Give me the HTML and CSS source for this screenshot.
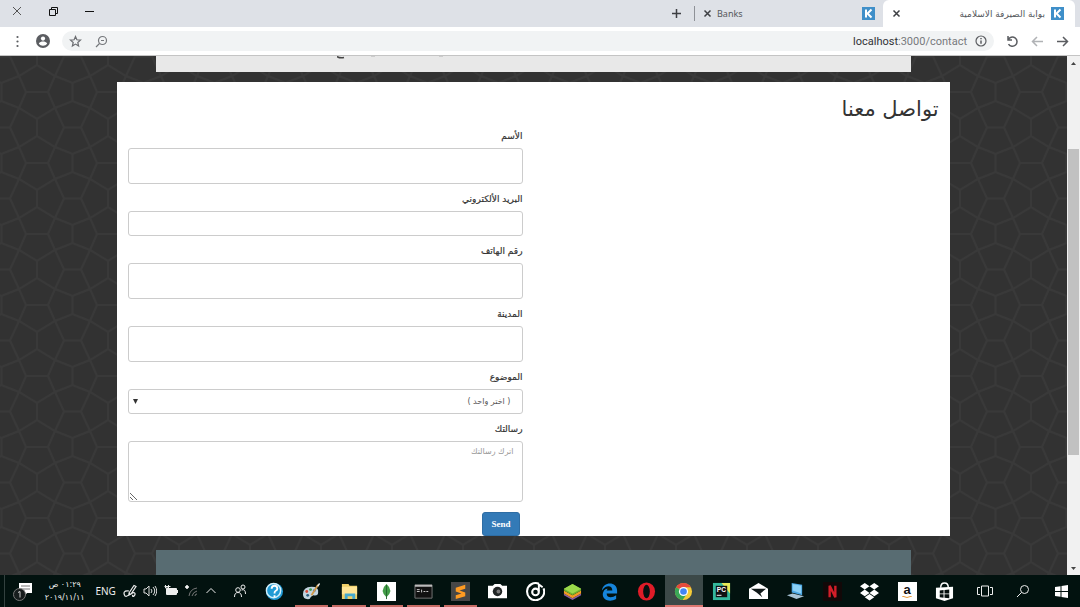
FILE: index.html
```
<!DOCTYPE html>
<html lang="ar" dir="rtl">
<head>
<meta charset="utf-8">
<title>بوابة الصيرفة الاسلامية</title>
<link rel="stylesheet" href="styles.css">
</head>
<body>
<header class="tabstrip">
  <div class="tab tab-active">
    <svg class="fav" viewBox="0 0 13 13"><rect width="13" height="13" fill="#3f8fc9"/><path d="M4 2.500v8M9.500 2.500L5.500 6.500L9.500 10.500" fill="none" stroke="#fff" stroke-width="2"/></svg>
    <span class="tab-title">بوابة الصيرفة الاسلامية</span>
    <button class="plain" aria-label="إغلاق"><svg width="9" height="9" viewBox="0 0 9 9"><path d="M1.500 1.500l6 6M7.500 1.500l-6 6" class="line dark"/></svg></button>
  </div>
  <div class="tab">
    <svg class="fav" viewBox="0 0 13 13"><rect width="13" height="13" fill="#3f8fc9"/><path d="M4 2.500v8M9.500 2.500L5.500 6.500L9.500 10.500" fill="none" stroke="#fff" stroke-width="2"/></svg>
    <span class="tab-title tab-latin">Banks</span>
    <button class="plain" aria-label="إغلاق"><svg width="9" height="9" viewBox="0 0 9 9"><path d="M1.500 1.500l6 6M7.500 1.500l-6 6" class="line dark"/></svg></button>
  </div>
  <button class="plain new-tab" aria-label="علامة تبويب جديدة"><svg width="11" height="11" viewBox="0 0 11 11"><path d="M5.500 1v9M1 5.500h9" class="line dark"/></svg></button>
  <div class="window-buttons">
    <button class="plain" aria-label="تصغير"><svg width="12" height="12" viewBox="0 0 12 12"><path d="M2 5.500h9" stroke="#111" stroke-width="1"/></svg></button>
    <button class="plain" aria-label="استعادة"><svg width="12" height="12" viewBox="0 0 12 12"><path d="M2.500 3.500h6v6h-6zM4.500 3V1.500h6v6H9" fill="none" stroke="#111"/></svg></button>
    <button class="plain" aria-label="إغلاق النافذة"><svg width="12" height="12" viewBox="0 0 12 12"><path d="M2 1l8 8M10 1l-8 8" stroke="#555"/></svg></button>
  </div>
</header>

<nav class="toolbar">
  <button class="plain" aria-label="رجوع"><svg width="13" height="13" viewBox="0 0 13 13"><path d="M1 6.500h10M7 2l4.500 4.500L7 11" class="line gray"/></svg></button>
  <button class="plain" aria-label="تقدم"><svg width="13" height="13" viewBox="0 0 13 13"><path d="M12 6.500H2M6 2L1.500 6.500L6 11" class="line light"/></svg></button>
  <button class="plain" aria-label="تحديث"><svg width="13" height="13" viewBox="0 0 13 13"><path d="M2 1v4h4M2.200 4.800a4.600 4.600 0 1 1 .3 4.300" class="line gray"/></svg></button>
  <div class="omnibox">
    <svg width="12" height="12" viewBox="0 0 12 12"><circle cx="6" cy="6" r="5" fill="none" stroke="#5b5d61" stroke-width="1.200"/><path d="M6 5.500v3.200M6 3v1.300" class="line gray"/></svg>
    <span class="url" dir="ltr"><b>localhost</b>:3000/contact</span>
    <button class="plain zoom" aria-label="تكبير"><svg width="13" height="13" viewBox="0 0 13 13"><circle cx="7.500" cy="5.500" r="4" fill="none" stroke="#75777b" stroke-width="1.200"/><path d="M4.500 8.500L1 12M6 5.500h3" fill="none" stroke="#75777b" stroke-width="1.200"/></svg></button>
    <button class="plain" aria-label="إشارة مرجعية"><svg width="13" height="13" viewBox="0 0 13 13"><path d="M6.500 1.500l1.400 3.300 3.600.3-2.700 2.400.8 3.500-3.100-1.900-3.100 1.900.8-3.500L1.500 5.100l3.600-.3z" fill="none" stroke="#6b6d71" stroke-width="1.200"/></svg></button>
  </div>
  <button class="plain avatar" aria-label="الحساب"><svg width="14" height="14" viewBox="0 0 14 14"><circle cx="7" cy="7" r="7" fill="#5b5d61"/><circle cx="7" cy="4.600" r="2.100" fill="#fff"/><path d="M2.800 9.600c1-1.600 2.500-2 4.200-2s3.200.4 4.200 2c-1 1.500-2.500 2.200-4.200 2.200s-3.200-.7-4.200-2.200z" fill="#fff"/></svg></button>
  <button class="plain" aria-label="القائمة"><svg width="13" height="13" viewBox="0 0 13 13" fill="#5b5d61"><circle cx="6.500" cy="2" r="1.100"/><circle cx="6.500" cy="6.500" r="1.100"/><circle cx="6.500" cy="11" r="1.100"/></svg></button>
</nav>

<div class="viewport">
  <div class="scrollbar" aria-hidden="true">
    <svg width="5" height="3" viewBox="0 0 7 4"><path d="M0 4L3.500 0L7 4z" fill="#444"/></svg>
    <div class="track"><div class="thumb"></div></div>
    <svg width="5" height="3" viewBox="0 0 7 4"><path d="M0 0L3.500 4L7 0z" fill="#444"/></svg>
  </div>
  <div class="page">
    <svg class="backdrop" aria-hidden="true">
      <defs>
        <pattern id="lattice" width="71" height="71" x="37" y="36" patternUnits="userSpaceOnUse">
          <g fill="none" stroke="#393939" stroke-width="2">
            <path d="M0 0h11M60 0h11M0 71h11M60 71h11M35.500 0v9M35.500 62v9M0 27v17M71 27v17M27 35.500h17"/>
            <path d="M11 0L18 16L27 35.500L18 55L11 71M60 0L53 16L44 35.500L53 55L60 71"/>
            <path d="M0 27L18 16L35.500 9L53 16L71 27M0 44L18 55L35.500 62L53 55L71 44"/>
          </g>
        </pattern>
      </defs>
      <rect width="100%" height="100%" fill="#323232"/>
      <rect width="100%" height="100%" fill="url(#lattice)"/>
    </svg>
    <div class="intro"><svg width="110" height="3" viewBox="0 0 110 3"><path d="M0 .5q3 2 7 1" fill="none" stroke="#444" stroke-width="1.500"/><path d="M34 .5h4M102 .5h4" stroke="#ccc"/></svg></div>
    <main class="card">
      <h1>تواصل معنا</h1>
      <form>
        <label for="name">الأسم</label>
        <input class="field tall" id="name" type="text">
        <label for="email">البريد الألكتروني</label>
        <input class="field" id="email" type="email">
        <label for="phone">رقم الهاتف</label>
        <input class="field tall" id="phone" type="tel">
        <label for="city">المدينة</label>
        <input class="field tall" id="city" type="text">
        <label for="subject">الموضوع</label>
        <select class="field" id="subject"><option>( اختر واحد )</option></select>
        <label for="message">رسالتك</label>
        <textarea class="field" id="message" placeholder="اترك رسالتك"></textarea>
        <button class="send" type="submit">Send</button>
      </form>
    </main>
    <footer class="page-footer"></footer>
  </div>
</div>

<footer class="taskbar" dir="ltr">
  <div class="tray">
    <svg class="notice" width="22" height="22" viewBox="0 0 22 22"><path d="M7 3h13v10h-5l-3 4v-4H7z" fill="#fff"/><path d="M9 6h9M9 9h9" stroke="#777"/><circle cx="7.500" cy="14.500" r="6" fill="#171d1d" stroke="#777"/><path d="M6 12.500l2-1v6" fill="none" stroke="#ccc"/></svg>
    <div class="clock" dir="rtl"><span>٠١:٢٩ ص</span><span dir="ltr">٢٠١٩/١١/١١</span></div>
    <span class="lang">ENG</span>
    <svg width="14" height="14" viewBox="0 0 14 14" fill="none" stroke="#eee" stroke-width="1.200"><path d="M6 9L11 1.500l2 1L8 10l-2 1zM6 7C1 6 0 9 2 12c2 1 4-1 5-3M8 10c4-3 5 0 3 2-1 1-2 0-1-1"/></svg>
    <svg width="14" height="12" viewBox="0 0 14 12" fill="none" stroke="#ddd"><path d="M1 4h2l3-3v10L3 8H1zM8 4q2 2 0 4M10 2q3.500 4 0 8M12 1q3.500 5 0 10"/></svg>
    <svg width="14" height="12" viewBox="0 0 14 12"><path d="M3 4h9v5H3z" fill="#eee"/><path d="M2.500 3.500h10v6h-10zM13.500 5v3M.5 1.500h6M1.500 0v3h3V0" fill="none" stroke="#eee"/></svg>
    <svg width="14" height="14" viewBox="0 0 14 14" fill="none" stroke="#777"><path d="M4 12q1-7 8-8M7 12q1-4 5-5M10 12q0-2 2-2"/><path d="M0 3h4M2 1v4" stroke="#fff" stroke-width="1.500"/></svg>
    <svg width="12" height="12" viewBox="0 0 12 12"><path d="M1.500 8L6 3.500 10.500 8" fill="none" stroke="#eee"/></svg>
    <svg class="people" width="14" height="14" viewBox="0 0 14 14" fill="none" stroke="#eee"><circle cx="5" cy="6" r="2.300"/><path d="M1.500 13q0-4.500 3.500-4.500t3.500 4.500"/><circle cx="10" cy="3" r="2"/><path d="M8.500 6q4-1.500 4 4"/></svg>
  </div>
  <div class="apps">
    <span class="app"><svg viewBox="0 0 20 20"><circle cx="10" cy="10" r="9" fill="#219bd5"/><circle cx="9" cy="9" r="7.500" fill="none" stroke="#d5f0fa" stroke-width="1.500"/><path d="M7 7q0-3 3-3t3 3q0 1.500-2 2.500-1 .5-1 2.500M10 14v2" fill="none" stroke="#fff" stroke-width="2"/></svg></span>
    <span class="app open"><svg viewBox="0 0 20 20"><path d="M1 13q0-8 9-8 8 0 7 6 0 4-5 3-3 1-4 4-7 1-7-5z" fill="#c2d4df"/><circle cx="5" cy="10" r="1.500" fill="#d74c3a"/><circle cx="9" cy="8" r="1.500" fill="#409c52"/><circle cx="13" cy="9" r="1.500" fill="#3268bb"/><circle cx="6" cy="14" r="1.500" fill="#2b6080"/><path d="M10 14l7-11" stroke="#cf994c" stroke-width="2"/><path d="M16 4l2-3 1 1-2 3z" fill="#eee"/></svg></span>
    <span class="app open"><svg viewBox="0 0 20 20"><path d="M2 2h7l1 2h8v14H2z" fill="#f0cf68"/><path d="M2 5h16v8H2z" fill="#ffe596"/><path d="M5 18v-6h11v6h-3v-3H8v3z" fill="#46aacf"/></svg></span>
    <span class="app open"><svg viewBox="0 0 20 20"><path d="M0 0h20v20H0z" fill="#fff"/><path d="M10 2q8 7 0 14-8-7 0-14z" fill="#439d48"/><path d="M10 3v15" stroke="#24662d"/></svg></span>
    <span class="app open"><svg viewBox="0 0 20 20"><path d="M1 3h18v14H1z" fill="#111" stroke="#777"/><path d="M1 3h18v2H1z" fill="#bbb"/><path d="M3 8h3M3 10h3M8 8v3M10 10h2M13 10h2" stroke="#ccc"/></svg></span>
    <span class="app open"><svg viewBox="0 0 20 20"><path d="M0 0h20v20H0z" fill="#474747"/><path d="M15 3v4L9 9l6 2v4L5 18v-4l6-2-6-2V6z" fill="#ff9b22"/></svg></span>
    <span class="app"><svg viewBox="0 0 20 20"><path d="M0 4h5l2-2h6l2 2h5v13H0z" fill="#fff"/><circle cx="10" cy="10" r="5" fill="#202525"/><circle cx="11" cy="10" r="2" fill="#777"/></svg></span>
    <span class="app"><svg viewBox="0 0 20 20" fill="none" stroke="#fff"><path d="M13.500 1.800a9 9 0 1 0 5 5" stroke-width="2.200"/><circle cx="10" cy="10.500" r="3.500" stroke-width="2.200"/><path d="M13.500 10V2.500l4 3" stroke-width="2"/></svg></span>
    <span class="app"><svg viewBox="0 0 20 20"><path d="M1 12l9 5 9-5v2l-9 5-9-5z" fill="#8d5ca4"/><path d="M1 9l9 5 9-5v3l-9 5-9-5z" fill="#f09b24"/><path d="M1 7l9-5 9 5v2l-9 5-9-5z" fill="#72b32e"/><path d="M1 7l9-5 9 5-9 5z" fill="#9bd94b"/></svg></span>
    <span class="app"><svg viewBox="0 0 20 20"><path d="M2 9C3-1 18-1 18 9v3H7c0 5 6 5 10 2v4C9 22 2 18 3 12c1-4 3-5 5-5L7 9h6c0-6-7-6-11 0z" fill="#1685dc"/></svg></span>
    <span class="app"><svg viewBox="0 0 20 20"><ellipse cx="10" cy="10" rx="9" ry="9.500" fill="#df1c28"/><ellipse cx="10" cy="10" rx="3.500" ry="7" fill="#061111"/></svg></span>
    <span class="app open current"><svg viewBox="0 0 20 20"><circle cx="10" cy="10" r="9" fill="#f6cb38"/><path d="M10 10L2.200 5.500A9 9 0 0 1 17.800 5.500H10z" fill="#e64a3c"/><path d="M10 10L2.200 5.500A9 9 0 0 0 9 19l5-7z" fill="#3aa757"/><circle cx="10" cy="10" r="4.800" fill="#fff"/><circle cx="10" cy="10" r="3.500" fill="#4285f4"/></svg></span>
    <span class="app"><svg viewBox="0 0 20 20"><path d="M1 1h18v18H1z" fill="#34b99d"/><path d="M10 1h9v11z" fill="#e9ea58"/><path d="M4 4h12v12H4z" fill="#111"/><path d="M5 14h5" stroke="#fff"/><text x="5" y="11" class="pc">PC</text></svg></span>
    <span class="app"><svg viewBox="0 0 20 20"><path d="M0 7l10-6 10 6v11H0z" fill="#fff"/><path d="M2 7h16l-6 5 2 4-6-5z" fill="#101919"/></svg></span>
    <span class="app"><svg viewBox="0 0 20 20"><path d="M6 1l11 2v11L6 11z" fill="#4ba7e3"/><path d="M7 2l9 2v8L7 9z" fill="#8cd0f5"/><path d="M1 14l6-2 12 3-8 3z" fill="#a9c4d5"/></svg></span>
    <span class="app"><svg viewBox="0 0 20 20"><path d="M0 0h20v20H0z" fill="#120808"/><path d="M7 16V4l6 12V4" fill="none" stroke="#d51e29" stroke-width="2.500"/></svg></span>
    <span class="app"><svg viewBox="0 0 20 20" fill="#fff"><path d="M5 1l5 3.500L5 8 0 4.500zM15 1l5 3.500L15 8l-5-3.500zM5 8l5 3.500L5 15l-5-3.500zM15 8l5 3.500-5 3.500-5-3.500zM10 12.500l5 3.500-5 3.500L5 16z"/></svg></span>
    <span class="app shop"><b>a</b><svg viewBox="0 0 12 3"><path d="M1 0q5 3 10 0" fill="none" stroke="#e99a35"/></svg></span>
    <span class="app"><svg viewBox="0 0 20 20"><path d="M1 6l18-1v12l-9 3-9-3z" fill="#fff"/><path d="M6 6q0-5 4-5t4 5" fill="none" stroke="#fff" stroke-width="1.500"/><path d="M5 9l4-.5V12H5zM10 8.500l5-.5v4h-5zM5 13h4v3.500L5 16zM10 13h5v4l-5-.5z" fill="#07100f"/></svg></span>
  </div>
  <div class="system">
    <svg width="16" height="12" viewBox="0 0 16 12" fill="none" stroke="#eee"><path d="M4.500 1v10h7V1zM3 2.500H.5v7H3M13 2.500h2.500v7H13"/></svg>
    <svg width="14" height="14" viewBox="0 0 14 14" fill="none" stroke="#eee"><circle cx="8.500" cy="5.500" r="4"/><path d="M5.500 8.500L1 13"/></svg>
    <svg width="13" height="13" viewBox="0 0 13 13" fill="#fff"><path d="M0 2l5.500-.8V6H0zM6.500 1L13 0v6H6.500zM0 7h5.500v4.800L0 11zM6.500 7H13v6l-6.500-1z"/></svg>
  </div>
</footer>
</body>
</html>
```
FILE: styles.css
```
* { box-sizing: border-box; }
body {
  margin: 0;
  height: 100vh;
  display: flex;
  flex-direction: column;
  overflow: hidden;
  font-family: "DejaVu Sans", sans-serif;
  color: #333;
}
svg { display: block; flex: none; }
.plain {
  display: grid;
  place-items: center;
  padding: 0;
  border: 0;
  background: none;
}
.line { fill: none; stroke-width: 1.5; }
.dark { stroke: #3d3f43; }
.gray { stroke: #5b5d61; }
.light { stroke: #b0b2b5; }

.tabstrip {
  display: flex;
  height: 27px;
  flex: none;
  padding-right: 5px;
  background: #dee1e7;
}
.tab {
  display: flex;
  align-items: center;
  width: 188px;
  padding: 0 8px;
  gap: 5px;
  font-size: 9px;
}
.tab-active {
  width: 192px;
  padding: 0 11px 0 9px;
  gap: 6px;
  background: #fff;
  border-radius: 6px 6px 0 0;
}
.fav { width: 13px; height: 13px; }
.tab-title { flex: 1; white-space: nowrap; color: #55585c; }
.tab-latin { font: 9px "Noto Sans", sans-serif; text-align: left; direction: ltr; }
.new-tab {
  width: 36px;
  margin: 6px 0;
  border-right: 1px solid #8e9197;
}
.window-buttons {
  display: flex;
  align-items: center;
  gap: 24px;
  margin-right: auto;
  padding-left: 11px;
  padding-bottom: 4px;
}

.toolbar {
  display: flex;
  align-items: center;
  gap: 12px;
  height: 29px;
  flex: none;
  padding: 0 11px;
  border-bottom: 1px solid #c4c4c4;
  background: #fff;
}
.omnibox {
  display: flex;
  align-items: center;
  flex: 1;
  height: 20px;
  gap: 13px;
  padding: 0 7px;
  border-radius: 10px;
  background: #f1f3f4;
}
.url { margin-right: -5px; font: 11px Roboto, sans-serif; color: #77797c; }
.url b { font-weight: 400; color: #303134; }
.zoom { margin-right: auto; }

.viewport { display: flex; flex: 1; min-height: 0; }
.scrollbar {
  display: flex;
  flex-direction: column;
  align-items: center;
  gap: 5px;
  width: 13px;
  padding: 6px 0 5px;
  background: #f1f1f1;
}
.track { flex: 1; width: 11px; padding-top: 79px; }
.thumb { height: 74%; background: #c1c1c1; }
.page {
  position: relative;
  display: flex;
  flex-direction: column;
  align-items: center;
  flex: 1;
  min-width: 0;
}
.backdrop { position: absolute; inset: 0; width: 100%; height: 100%; }
.intro, .card, .page-footer { position: relative; }
.intro {
  width: 70.7%;
  height: 16px;
  flex: none;
  padding-right: 464px;
  background: #e8e8e8;
}
.card {
  width: 78%;
  margin: 10px 0 14px;
  padding: 0 11px;
  background: #fff;
}
.card h1 {
  margin: 0;
  height: 46px;
  line-height: 54px;
  font-size: 21px;
  font-weight: 400;
}
form {
  display: flex;
  flex-direction: column;
  align-items: flex-start;
  width: calc(50% - 11px);
  margin-right: auto;
}
label { font-size: 9px; line-height: 16px; margin-bottom: 4px; -webkit-text-stroke: 0.2px #333; }
.field {
  width: 100%;
  height: 25px;
  margin: 0 0 7px;
  padding: 0 11px;
  border: 1px solid #ccc;
  border-radius: 3px;
  background: #fff;
  color: #555;
  font: 8px "DejaVu Sans", sans-serif;
}
.tall { height: 36px; }
select.field {
  appearance: none;
  background: #fff url("data:image/svg+xml,%3Csvg xmlns='http://www.w3.org/2000/svg' width='5' height='5'%3E%3Cpath d='M0 0h5L2.500 5z' fill='%23333'/%3E%3C/svg%3E") 4px 9px no-repeat;
}
textarea.field { height: 61px; padding: 5px 8px; margin-bottom: 10px; resize: vertical; }
textarea::placeholder { color: #999; }
.send {
  height: 24px;
  margin-right: 3px;
  padding: 0 8px;
  border: 1px solid #2e6da4;
  border-radius: 3px;
  background: #337ab7;
  color: #fff;
  font: bold 9px "Liberation Serif", serif;
}
.page-footer { width: 70.7%; flex: 1; background: #586c72; }

.taskbar {
  display: flex;
  align-items: center;
  height: 32px;
  flex: none;
  background: #02120f;
  color: #eee;
}
.tray {
  display: flex;
  align-items: center;
  justify-content: space-between;
  width: 256px;
  height: 100%;
  padding: 0 9px 0 8px;
  box-shadow: inset 4px 0 #02120f, inset 5px 0 #33413f;
}
.clock {
  display: flex;
  flex-direction: column;
  align-items: center;
  width: 48px;
  font-size: 8px;
  line-height: 13px;
  white-space: nowrap;
}
.notice { margin-left: 4px; }
.lang { font: 10px "Noto Sans", sans-serif; }
.people { margin-left: 9px; }
.apps { display: grid; grid-template-columns: repeat(19, 1fr); flex: 1; height: 100%; }
.app { display: grid; place-items: center; padding-top: 2px; border-bottom: 2px solid transparent; }
.app svg { width: 19px; height: 19px; }
.open { border-image: linear-gradient(to right, transparent 10%, #c66b64 10%, #c66b64 90%, transparent 90%) 2; }
.current { border-image: none; border-bottom-color: #dd7770; background: #3c4948; }
.pc { font: bold 7px "Liberation Sans", sans-serif; fill: #fff; }
.shop {
  place-self: center;
  align-content: center;
  width: 19px;
  height: 19px;
  padding: 0;
  border: 0;
  background: #fff;
  color: #111;
  font: 13px/13px "Liberation Sans", sans-serif;
}
.shop svg { width: 12px; height: 3px; }
.system {
  display: grid;
  grid-template-columns: repeat(3, 38px);
  place-items: center;
  margin-left: 3px;
}
```
